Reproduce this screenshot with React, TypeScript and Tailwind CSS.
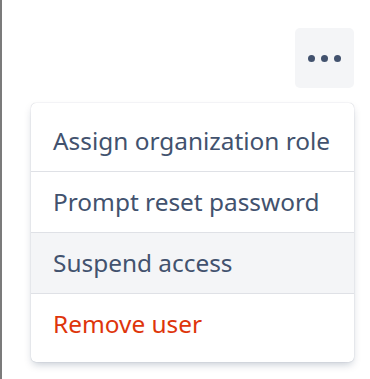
const items = [
  { label: "Assign organization role" },
  { label: "Prompt reset password" },
  { label: "Suspend access", active: true },
  { label: "Remove user", danger: true },
];

const App = () => {
  return (
    <div className="h-[379px] w-[370px] bg-white border-l-2 border-[#7b7b7b] font-['Noto_Sans',sans-serif]">
      <div className="flex flex-col items-end pt-[28px] pr-[16px]">
        <button className="w-[59px] h-[60px] rounded-[5px] bg-[#f4f5f7] flex items-center justify-center gap-[6px]">
          <span className="w-[7px] h-[7px] rounded-full bg-[#42526e]" />
          <span className="w-[7px] h-[7px] rounded-full bg-[#42526e]" />
          <span className="w-[7px] h-[7px] rounded-full bg-[#42526e]" />
        </button>
        <div className="mt-[15px] w-[323px] bg-white rounded-[5px] py-[8px] shadow-[0_4px_8px_-2px_rgba(9,30,66,0.25),0_0_1px_rgba(9,30,66,0.31)]">
          {items.map((item, i) => (
            <div
              key={item.label}
              className={`flex items-center px-[22px] text-[24.4px] whitespace-nowrap ${
                i > 0 ? "h-[61px] border-t border-[#dfe1e6]" : "h-[60px]"
              } ${item.active ? "bg-[#f4f5f7]" : ""} ${
                item.danger ? "text-[#de350b]" : "text-[#42526e]"
              }`}
            >
              {item.label}
            </div>
          ))}
        </div>
      </div>
    </div>
  );
};

export default App;
